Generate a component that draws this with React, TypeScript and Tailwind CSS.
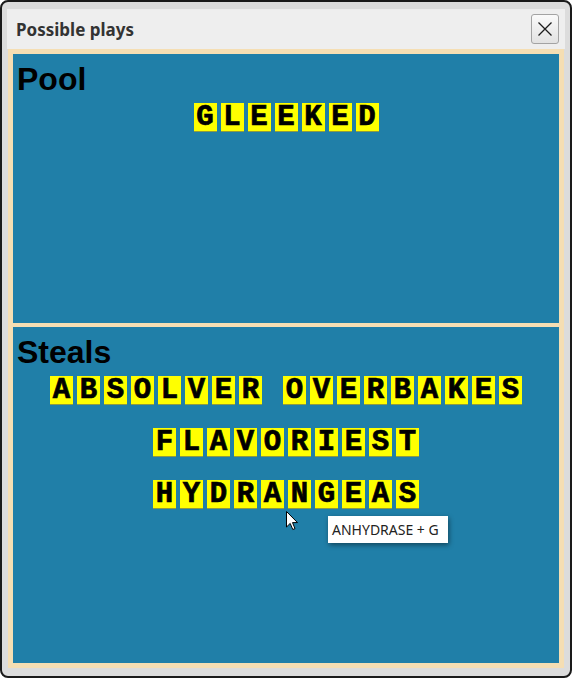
import React from "react";

const pool = ["GLEEKED"];
const steals = ["ABSOLVER", "OVERBAKES", "FLAVORIEST", "HYDRANGEAS"];

const Tile: React.FC<{ letter: string }> = ({ letter }) => (
    <span className="flex h-[28px] w-[23px] items-center justify-center bg-[#ffff00] font-['Liberation_Mono',monospace] text-[29px] leading-none font-bold text-black shadow-[0_1px_0_#8d9a43] [-webkit-text-stroke:0.7px_#000]">
        {letter}
    </span>
);

const Word: React.FC<{ word: string }> = ({ word }) => (
    <div className="flex gap-[4px]">
        {word.split("").map((ch, i) => (
            <Tile key={i} letter={ch} />
        ))}
    </div>
);

const Section: React.FC<{ title: string; words: string[]; className?: string }> = ({
    title,
    words,
    className,
}) => (
    <div className={`bg-[#207fa8] px-[4px] pt-[7px] ${className ?? ""}`}>
        <h2 className="font-['Liberation_Sans',Arial,sans-serif] text-[32px] leading-[37px] font-bold text-black">
            {title}
        </h2>
        <div className="mt-[5px] flex flex-wrap justify-center gap-x-[21px] gap-y-[24px]">
            {words.map((w) => (
                <Word key={w} word={w} />
            ))}
        </div>
    </div>
);

export default function App() {
    return (
        <div className="flex h-[678px] w-[572px] flex-col rounded-[8px] border-2 border-[#1a1a1a] bg-[#dcdcdc] px-[5px] pt-[7px] pb-[8px]">
            <div className="flex h-[40px] items-center justify-between bg-[#eeeeee] pr-[6px] pl-[9px]">
                <span className="pt-[2px] font-['Noto_Sans',sans-serif] text-[17px] font-bold text-[#333333]">
                    Possible plays
                </span>
                <button className="flex h-[30px] w-[28px] items-center justify-center rounded-[3px] border border-[#a3a3a3] bg-gradient-to-b from-[#fafafa] to-[#e2e2e2]">
                    <svg width="16" height="16" viewBox="0 0 16 16">
                        <path d="M1.5 1.5 L14.5 14.5 M14.5 1.5 L1.5 14.5" stroke="#1c1c1c" strokeWidth="1.3" />
                    </svg>
                </button>
            </div>
            <div className="relative mx-[1px] flex flex-1 flex-col gap-[4px] bg-[#f5deb3] p-[5px]">
                <Section title="Pool" words={pool} className="h-[269px]" />
                <Section title="Steals" words={steals} className="flex-1" />

                {/* hover tooltip + pointer */}
                <svg
                    className="absolute top-[462px] left-[278px]"
                    width="13"
                    height="20"
                    viewBox="0 0 13 20"
                >
                    <path
                        d="M0.5 0.5 L0.5 16 L4.2 12.4 L6.8 18.5 L9 17.6 L6.5 11.6 L11.5 11.6 Z"
                        fill="#ffffff"
                        stroke="#000000"
                        strokeWidth="1"
                    />
                </svg>
                <div className="absolute top-[467px] left-[320px] flex h-[27px] w-[120px] items-center bg-white pl-[4px] font-['Noto_Sans',sans-serif] text-[14px] text-[#222222] shadow-[1px_2px_5px_rgba(0,0,0,0.45)]">
                    ANHYDRASE + G
                </div>
            </div>
        </div>
    );
}
